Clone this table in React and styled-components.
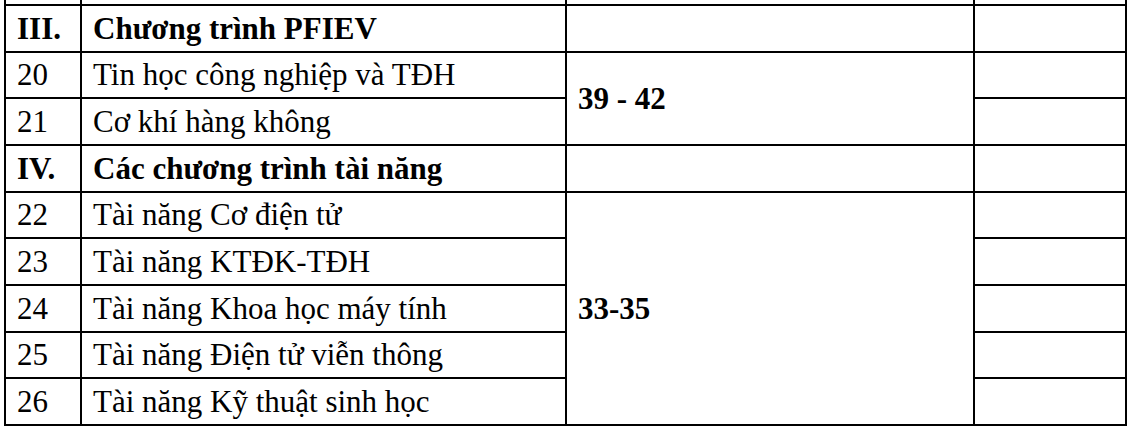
import React from "react";
import styled, { createGlobalStyle } from "styled-components";

const GlobalStyle = createGlobalStyle`
  html, body {
    margin: 0;
    padding: 0;
    background: #ffffff;
  }
  body {
    font-family: "Liberation Serif", "Times New Roman", serif;
    color: #000;
  }
`;

const Page = styled.div`
  width: 1132px;
  height: 438px;
  overflow: hidden;
  background: #fff;
`;

const Table = styled.table`
  margin-left: 4px;
  border-collapse: collapse;
  table-layout: fixed;
  width: 1122px;
`;

const Row = styled.tr`
  height: ${(p) => (p.$stub ? "5px" : "46.67px")};
`;

const Cell = styled.td`
  border: 2px solid #000;
  border-top: ${(p) => (p.$stub ? "none" : "2px solid #000")};
  padding: ${(p) => (p.$stub ? "0" : "0 11px")};
  font-family: "Liberation Serif", "Times New Roman", serif;
  font-size: 31px;
  font-weight: ${(p) => (p.$bold ? 700 : 400)};
  line-height: 1;
  vertical-align: middle;
  white-space: nowrap;
  overflow: hidden;
`;

const sections = [
  {
    roman: "III.",
    title: "Chương trình PFIEV",
    score: "39 - 42",
    items: [
      ["20", "Tin học công nghiệp và TĐH"],
      ["21", "Cơ khí hàng không"],
    ],
  },
  {
    roman: "IV.",
    title: "Các chương trình tài năng",
    score: "33-35",
    items: [
      ["22", "Tài năng Cơ điện tử"],
      ["23", "Tài năng KTĐK-TĐH"],
      ["24", "Tài năng Khoa học máy tính"],
      ["25", "Tài năng Điện tử viễn thông"],
      ["26", "Tài năng Kỹ thuật sinh học"],
    ],
  },
];

export default function App() {
  return (
    <Page>
      <GlobalStyle />
      <Table>
        <colgroup>
          <col style={{ width: 76 }} />
          <col style={{ width: 485 }} />
          <col style={{ width: 408 }} />
          <col style={{ width: 152 }} />
        </colgroup>
        <tbody>
          <Row $stub>
            <Cell $stub />
            <Cell $stub />
            <Cell $stub />
            <Cell $stub />
          </Row>
          {sections.map((s) => (
            <React.Fragment key={s.roman}>
              <Row>
                <Cell $bold>{s.roman}</Cell>
                <Cell $bold>{s.title}</Cell>
                <Cell />
                <Cell />
              </Row>
              {s.items.map(([n, name], i) => (
                <Row key={n}>
                  <Cell>{n}</Cell>
                  <Cell>{name}</Cell>
                  {i === 0 && (
                    <Cell $bold rowSpan={s.items.length}>
                      {s.score}
                    </Cell>
                  )}
                  <Cell />
                </Row>
              ))}
            </React.Fragment>
          ))}
        </tbody>
      </Table>
    </Page>
  );
}
